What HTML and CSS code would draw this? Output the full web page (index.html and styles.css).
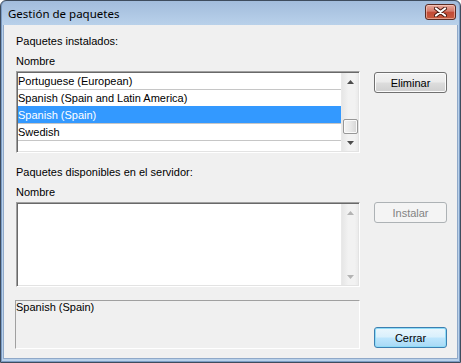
FILE: index.html
```html
<!DOCTYPE html>
<html>
  <head>
    <link rel="stylesheet" href="styles.css">
  </head>
  <body>
    <div class="window">
      <div class="titlebar">
        <span class="title">Gestión de paquetes</span>
        <div class="close">
          <svg width="13" height="10" viewBox="0 0 13 10">
            <path d="M2 1.5 L11 8.5 M11 1.5 L2 8.5" stroke="#4a1810" stroke-width="4" stroke-linecap="round"/>
            <path d="M2 1.5 L11 8.5 M11 1.5 L2 8.5" stroke="#fff" stroke-width="2.2" stroke-linecap="round"/>
          </svg>
        </div>
      </div>
      <div class="client">
        <div class="label first">Paquetes instalados:</div>
        <div class="label col-head">Nombre</div>
        <div class="row">
          <div class="listbox installed">
            <ul class="items">
              <li>Portuguese (European)</li>
              <li>Spanish (Spain and Latin America)</li>
              <li class="sel">Spanish (Spain)</li>
              <li>Swedish</li>
              <li></li>
            </ul>
            <div class="scrollbar">
              <div class="arrow"><svg width="7" height="4" viewBox="0 0 7 4"><path d="M0 4 L3.5 0 L7 4 Z" fill="#4d4d4d"/></svg></div>
              <div class="track"><div class="thumb"></div></div>
              <div class="arrow"><svg width="7" height="4" viewBox="0 0 7 4"><path d="M0 0 L7 0 L3.5 4 Z" fill="#4d4d4d"/></svg></div>
            </div>
          </div>
          <button class="btn eliminar">Eliminar</button>
        </div>

        <div class="label second">Paquetes disponibles en el servidor:</div>
        <div class="label col-head">Nombre</div>
        <div class="row">
          <div class="listbox available">
            <ul class="items"></ul>
            <div class="scrollbar off">
              <div class="arrow"><svg width="7" height="4" viewBox="0 0 7 4"><path d="M0 4 L3.5 0 L7 4 Z" fill="#b4b4b4"/></svg></div>
              <div class="track"></div>
              <div class="arrow"><svg width="7" height="4" viewBox="0 0 7 4"><path d="M0 0 L7 0 L3.5 4 Z" fill="#b4b4b4"/></svg></div>
            </div>
          </div>
          <button class="btn disabled">Instalar</button>
        </div>

        <div class="row bottom">
          <div class="status">Spanish (Spain)</div>
          <button class="btn default">Cerrar</button>
        </div>
      </div>
    </div>
  </body>
</html>
```

FILE: styles.css
```css
* {
  margin: 0;
  padding: 0;
  box-sizing: border-box;
}
body {
  font-family: "Liberation Sans", Arial, sans-serif;
  font-size: 11px;
  color: #000;
  background: #fff;
}
.window {
  width: 461px;
  height: 363px;
  border: 1px solid #3e4c5e;
  border-radius: 6px 6px 0 0;
  background: linear-gradient(#a2bcdc, #b9d1ea 24px, #b9d1ea);
  padding: 0 2px 3px 2px;
  display: flex;
  flex-direction: column;
  box-shadow: inset 1px 0 0 #7c9cc4, inset -1px 0 0 #7c9cc4, inset 0 -1px 0 #7c9cc4;
}
.titlebar {
  height: 24px;
  display: flex;
  align-items: center;
  justify-content: space-between;
  padding: 0 2px 0 5px;
}
.title {
  font-family: "Noto Sans", sans-serif;
  font-size: 11.5px;
  color: #000;
}
.close {
  align-self: flex-start;
  margin-top: 3px;
  width: 31px;
  height: 16px;
  border: 1px solid #5a2a22;
  border-radius: 3px;
  background: linear-gradient(#e7a99c, #d47a6a 45%, #c24a36 50%, #c65a3e 100%);
  box-shadow: inset 0 0 0 1px rgba(255, 220, 210, 0.5);
  display: flex;
  align-items: center;
  justify-content: center;
}
.client {
  flex: 1;
  background: #f0f0f0;
  padding: 0 0 0 12px;
  border: 1px solid #8fa8c8;
  border-top: none;
  margin: 0 0 0 0;
}
.label {
  line-height: 13px;
  height: 13px;
}
.label.first {
  margin-top: 10px;
  margin-bottom: 7px;
}
.label.second {
  margin-top: 13px;
  margin-bottom: 7px;
}
.label.col-head {
  margin-bottom: 3px;
}
.row {
  display: flex;
  gap: 14px;
  align-items: flex-start;
}
.listbox {
  width: 344px;
  background: #fff;
  border: 1px solid;
  border-color: #a0a0a0 #fff #fff #a0a0a0;
  box-shadow: inset 1px 1px 0 #696969, inset -1px -1px 0 #e3e3e3;
  padding: 1px;
  display: flex;
}
.listbox.installed {
  height: 82px;
}
.listbox.available {
  height: 85px;
}
.items {
  list-style: none;
  flex: 1;
  overflow: hidden;
}
.items li {
  height: 17px;
  line-height: 16px;
  border-bottom: 1px solid #c6c6c6;
  white-space: nowrap;
}
.items li:last-child {
  border-bottom: none;
}
.items li.sel {
  background: #3399ff;
  color: #fff;
  box-shadow: 0 -1px 0 #3399ff;
}
.scrollbar {
  width: 17px;
  display: flex;
  flex-direction: column;
  background: linear-gradient(to right, #e6e6e6, #f2f2f2 40%, #f2f2f2 80%, #ebebeb);
  border-left: 1px solid #e9e9e9;
}
.arrow {
  height: 17px;
  display: flex;
  align-items: center;
  justify-content: center;
}
.track {
  flex: 1;
  display: flex;
  flex-direction: column;
  justify-content: flex-end;
  align-items: center;
}
.thumb {
  width: 15px;
  height: 15px;
  border: 1px solid #979797;
  border-radius: 2px;
  background: linear-gradient(to right, #f3f3f3, #e8e8e8 50%, #d6d6d6);
  box-shadow: inset 0 0 0 1px #fafafa;
}
.btn {
  width: 73px;
  height: 21px;
  font-family: "Liberation Sans", Arial, sans-serif;
  font-size: 11px;
  color: #000;
  border: 1px solid #707070;
  border-radius: 3px;
  background: linear-gradient(#f2f2f2, #ebebeb 48%, #dddddd 52%, #cfcfcf);
  box-shadow: inset 0 0 0 1px #fbfbfb;
}
.btn.eliminar {
  margin-top: 1px;
}
.btn.disabled {
  color: #838383;
  border-color: #adb2b5;
  background: #f4f4f4;
  box-shadow: none;
}
.row.bottom {
  margin-top: 13px;
  align-items: flex-end;
}
.status {
  width: 345px;
  height: 49px;
  margin-left: -1px;
  border: 1px solid;
  border-color: #a0a0a0 #fff #fff #a0a0a0;
  line-height: 13px;
  padding-left: 0;
}
.btn.default {
  margin-bottom: 1px;
  border-color: #3c7fb1;
  background: linear-gradient(#eaf6fd, #d9f0fc 48%, #bee6fd 52%, #a7d9f5);
  box-shadow: inset 0 0 0 1px #8fdcf7;
}
```
